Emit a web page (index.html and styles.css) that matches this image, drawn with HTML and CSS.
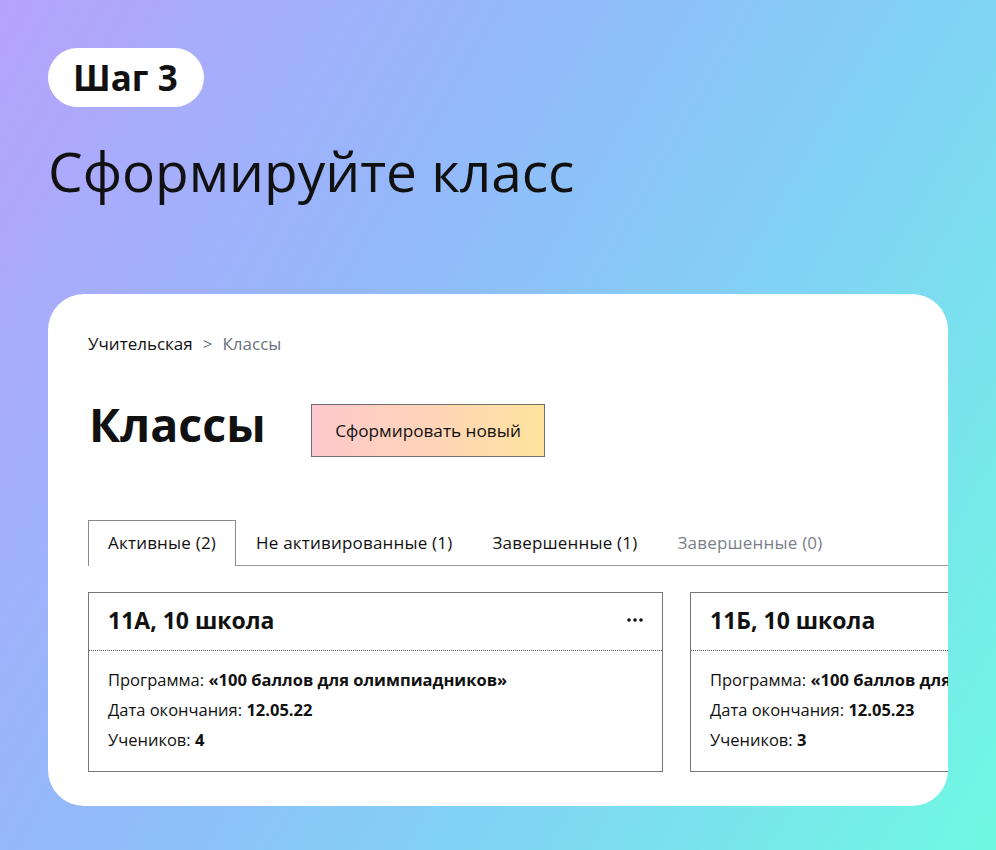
FILE: index.html
```html
<!DOCTYPE html>
<html lang="ru">
<head>
<meta charset="utf-8">
<link rel="stylesheet" href="styles.css">
</head>
<body>
<div class="page">
  <div class="badge">Шаг 3</div>
  <h1 class="headline">Сформируйте класс</h1>
  <div class="panel">
    <div class="crumbs"><span class="crumb">Учительская</span><span class="sep">&gt;</span><span class="crumb-current">Классы</span></div>
    <div class="title-row">
      <h2 class="title">Классы</h2>
      <button class="btn">Сформировать новый</button>
    </div>
    <div class="tabs">
      <div class="tab active">Активные (2)</div>
      <div class="tab">Не активированные (1)</div>
      <div class="tab">Завершенные (1)</div>
      <div class="tab muted">Завершенные (0)</div>
    </div>
    <div class="cards">
      <div class="card">
        <div class="card-head">
          <span class="card-title">11А, 10 школа</span>
          <svg class="more" width="16" height="4" viewBox="0 0 16 4"><circle cx="2" cy="2" r="1.8"/><circle cx="8" cy="2" r="1.8"/><circle cx="14" cy="2" r="1.8"/></svg>
        </div>
        <div class="card-body">
          <div class="line">Программа: <b>«100 баллов для олимпиадников»</b></div>
          <div class="line">Дата окончания: <b>12.05.22</b></div>
          <div class="line">Учеников: <b>4</b></div>
        </div>
      </div>
      <div class="card">
        <div class="card-head">
          <span class="card-title">11Б, 10 школа</span>
        </div>
        <div class="card-body">
          <div class="line">Программа: <b>«100 баллов для олимпиадников»</b></div>
          <div class="line">Дата окончания: <b>12.05.23</b></div>
          <div class="line">Учеников: <b>3</b></div>
        </div>
      </div>
    </div>
  </div>
</div>
</body>
</html>
```

FILE: styles.css
```css
* { box-sizing: border-box; }
html, body { margin: 0; padding: 0; }
body {
  width: 996px;
  height: 850px;
  overflow: hidden;
  font-family: "Open Sans", "Noto Sans", sans-serif;
  color: #111;
  background: linear-gradient(120deg, #b7a3fd 0%, #94b8fa 35%, #82d0f6 62%, #6ff9e2 100%);
}
.page {
  padding: 48px 0 0 48px;
}
.badge {
  display: inline-flex;
  align-items: center;
  height: 59px;
  padding: 0 26px 0 25px;
  border-radius: 30px;
  background: #fff;
  font-size: 35px;
  font-weight: 700;
  color: #111;
}
.headline {
  margin: 33px 0 0 0;
  height: 64px;
  line-height: 62px;
  font-size: 55px;
  font-weight: 400;
  color: #111;
}
.panel {
  margin-top: 90px;
  width: 900px;
  height: 512px;
  background: #fff;
  border-radius: 36px;
  overflow: hidden;
  padding: 40px 0 0 40px;
}
.crumbs {
  display: flex;
  gap: 10px;
  height: 20px;
  line-height: 20px;
  font-size: 17px;
  color: #111;
}
.crumb-current { color: #6b7280; }
.sep { color: #6b7280; }
.title-row {
  display: flex;
  align-items: center;
  margin-top: 50px;
  height: 53px;
}
.title {
  margin: -12px 0 0 1px;
  font-size: 46.5px;
  font-weight: 700;
  line-height: 53px;
  color: #111;
  width: 222px;
}
.btn {
  height: 53px;
  width: 234px;
  border: 1px solid #707070;
  background: linear-gradient(90deg, #ffc8cc 0%, #ffd4b8 50%, #ffe39e 100%);
  font-family: inherit;
  font-size: 17.2px;
  color: #111;
  padding: 0;
}
.tabs {
  display: flex;
  margin-top: 63px;
  height: 46px;
  border-bottom: 1px solid #9a9a9a;
}
.tab {
  height: 46px;
  padding: 0 19px;
  line-height: 43px;
  font-size: 17px;
  letter-spacing: 0.2px;
  color: #111;
  border: 1px solid transparent;
  border-bottom: none;
}
.tab.active {
  border-color: #8a8a8a;
  background: #fff;
  margin-bottom: -1px;
  height: 46px;
}
.tab.muted { color: #7a7f88; }
.cards {
  display: flex;
  gap: 27px;
  margin-top: 26px;
}
.card {
  flex: 0 0 575px;
  height: 180px;
  border: 1px solid #777;
}
.card-head {
  height: 58px;
  display: flex;
  align-items: center;
  justify-content: space-between;
  padding: 0 19px 4px 19px;
  border-bottom: 1px dotted #555;
}
.card-title {
  font-size: 23px;
  font-weight: 700;
  color: #111;
}
.more { fill: #111; }
.card-body {
  padding: 14px 19px 0 19px;
}
.line {
  height: 30px;
  line-height: 30px;
  font-size: 16.5px;
  color: #111;
  white-space: nowrap;
}
.line b { font-weight: 700; }
```
